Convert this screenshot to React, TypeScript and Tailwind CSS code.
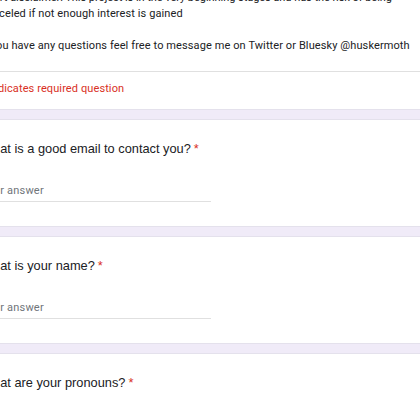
import React from 'react';

const questions = [
  { id: 'email', title: 'What is a good email to contact you?' },
  { id: 'name', title: 'What is your name?' },
  { id: 'pronouns', title: 'What are your pronouns?' },
];

function QuestionCard({ title }: { title: string }) {
  return (
    <div className="bg-white border border-[#e4e1ec] rounded-[6px] px-[19px] pt-[19px] pb-[24px]">
      <div className="text-[12.8px] leading-[20px] text-[#202124] font-['Liberation_Sans',Arial,sans-serif]">
        {title}
        <span className="text-[#d93025] ml-[3px]">*</span>
      </div>
      <div className="mt-[24px] w-[230px] border-b border-[#e0e0e0] pb-[2px]">
        <input
          type="text"
          placeholder="Your answer"
          className="block w-full h-[16px] p-0 bg-transparent outline-none text-[11px] leading-[16px] tracking-[0.2px] text-[#202124] placeholder:text-[#70757a] font-['Roboto',sans-serif]"
        />
      </div>
    </div>
  );
}

export default function App() {
  return (
    <div className="w-[420px] h-[420px] overflow-hidden bg-[#f0ebf8]">
      <div className="-ml-[39px] -mt-[11px] w-[540px] flex flex-col gap-[9px]">
        {/* Header card */}
        <div className="bg-white border border-[#e4e1ec] rounded-b-[6px] font-['Roboto',sans-serif]">
          <div className="px-[19px] pb-[17px] text-[11px] leading-[16px] tracking-[0.1px] text-[#202124]">
            <p className="tracking-[-0.05px]">
              Short disclaimer: This project is in the very beginning stages and has the risk of being
              <br />
              <span className="tracking-[0.1px]">canceled if not enough interest is gained</span>
            </p>
            <p className="mt-[16px]">
              If you have any questions feel free to message me on Twitter or Bluesky @huskermoth
            </p>
          </div>
          <div className="border-t border-[#e0e0e0] px-[19px] pt-[9px] pb-[12px] text-[11px] leading-[16px] tracking-[0.1px] text-[#d93025]">
            * Indicates required question
          </div>
        </div>

        {questions.map((q) => (
          <QuestionCard key={q.id} title={q.title} />
        ))}
      </div>
    </div>
  );
}
